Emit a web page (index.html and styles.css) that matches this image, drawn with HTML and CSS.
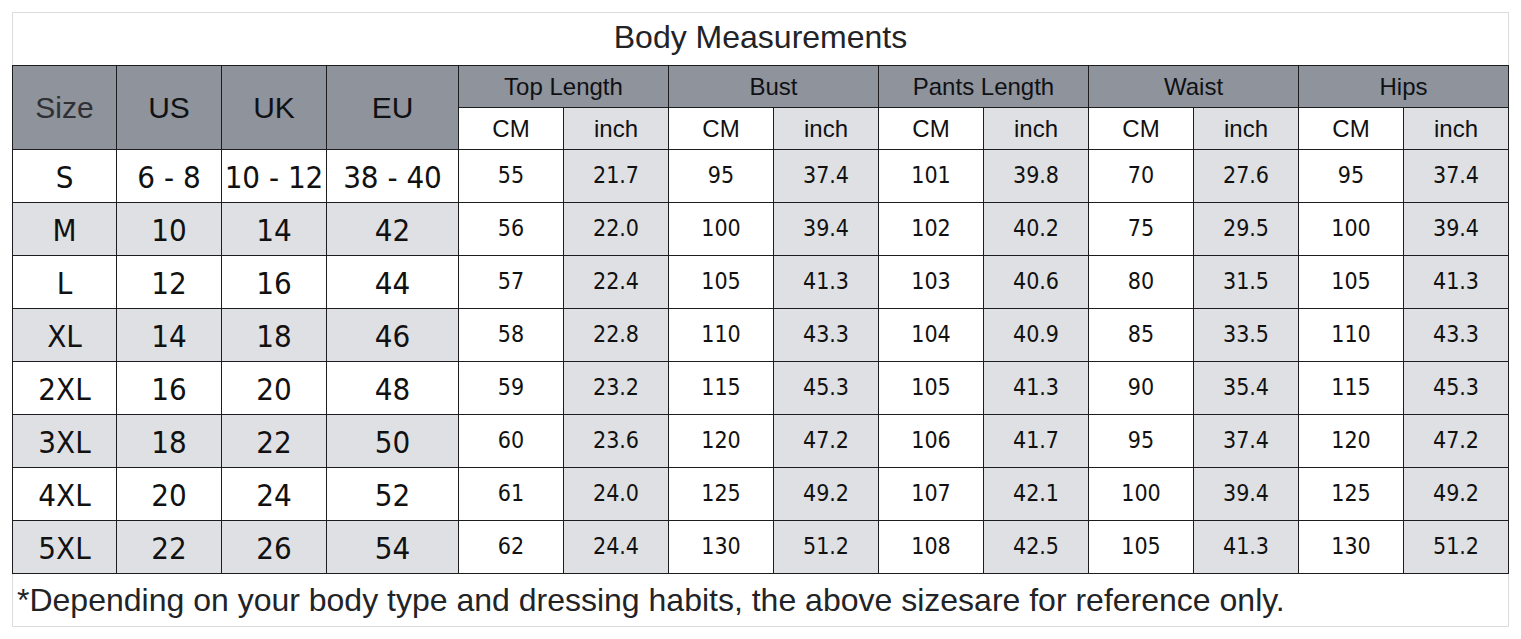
FILE: index.html
```html
<!DOCTYPE html>
<html lang="en">
<head>
<meta charset="utf-8">
<title>Body Measurements</title>
<link rel="stylesheet" href="styles.css">
</head>
<body>
<div class="chart">
  <div class="title">Body Measurements</div>
  <div class="grid">
    <div class="cell head first size-h rs2">Size</div>
    <div class="cell head rs2">US</div>
    <div class="cell head rs2">UK</div>
    <div class="cell head rs2">EU</div>
    <div class="cell head group cs2">Top Length</div>
    <div class="cell head group cs2">Bust</div>
    <div class="cell head group cs2">Pants Length</div>
    <div class="cell head group cs2">Waist</div>
    <div class="cell head group cs2">Hips</div>
    <div class="cell unit">CM</div><div class="cell unit alt">inch</div>
    <div class="cell unit">CM</div><div class="cell unit alt">inch</div>
    <div class="cell unit">CM</div><div class="cell unit alt">inch</div>
    <div class="cell unit">CM</div><div class="cell unit alt">inch</div>
    <div class="cell unit">CM</div><div class="cell unit alt">inch</div>

    <div class="cell big first">S</div><div class="cell big">6 - 8</div><div class="cell big">10 - 12</div><div class="cell big">38 - 40</div>
    <div class="cell num">55</div><div class="cell num alt">21.7</div><div class="cell num">95</div><div class="cell num alt">37.4</div><div class="cell num">101</div><div class="cell num alt">39.8</div><div class="cell num">70</div><div class="cell num alt">27.6</div><div class="cell num">95</div><div class="cell num alt">37.4</div>

    <div class="cell big first alt">M</div><div class="cell big alt">10</div><div class="cell big alt">14</div><div class="cell big alt">42</div>
    <div class="cell num">56</div><div class="cell num alt">22.0</div><div class="cell num">100</div><div class="cell num alt">39.4</div><div class="cell num">102</div><div class="cell num alt">40.2</div><div class="cell num">75</div><div class="cell num alt">29.5</div><div class="cell num">100</div><div class="cell num alt">39.4</div>

    <div class="cell big first">L</div><div class="cell big">12</div><div class="cell big">16</div><div class="cell big">44</div>
    <div class="cell num">57</div><div class="cell num alt">22.4</div><div class="cell num">105</div><div class="cell num alt">41.3</div><div class="cell num">103</div><div class="cell num alt">40.6</div><div class="cell num">80</div><div class="cell num alt">31.5</div><div class="cell num">105</div><div class="cell num alt">41.3</div>

    <div class="cell big first alt">XL</div><div class="cell big alt">14</div><div class="cell big alt">18</div><div class="cell big alt">46</div>
    <div class="cell num">58</div><div class="cell num alt">22.8</div><div class="cell num">110</div><div class="cell num alt">43.3</div><div class="cell num">104</div><div class="cell num alt">40.9</div><div class="cell num">85</div><div class="cell num alt">33.5</div><div class="cell num">110</div><div class="cell num alt">43.3</div>

    <div class="cell big first">2XL</div><div class="cell big">16</div><div class="cell big">20</div><div class="cell big">48</div>
    <div class="cell num">59</div><div class="cell num alt">23.2</div><div class="cell num">115</div><div class="cell num alt">45.3</div><div class="cell num">105</div><div class="cell num alt">41.3</div><div class="cell num">90</div><div class="cell num alt">35.4</div><div class="cell num">115</div><div class="cell num alt">45.3</div>

    <div class="cell big first alt">3XL</div><div class="cell big alt">18</div><div class="cell big alt">22</div><div class="cell big alt">50</div>
    <div class="cell num">60</div><div class="cell num alt">23.6</div><div class="cell num">120</div><div class="cell num alt">47.2</div><div class="cell num">106</div><div class="cell num alt">41.7</div><div class="cell num">95</div><div class="cell num alt">37.4</div><div class="cell num">120</div><div class="cell num alt">47.2</div>

    <div class="cell big first">4XL</div><div class="cell big">20</div><div class="cell big">24</div><div class="cell big">52</div>
    <div class="cell num">61</div><div class="cell num alt">24.0</div><div class="cell num">125</div><div class="cell num alt">49.2</div><div class="cell num">107</div><div class="cell num alt">42.1</div><div class="cell num">100</div><div class="cell num alt">39.4</div><div class="cell num">125</div><div class="cell num alt">49.2</div>

    <div class="cell big first alt">5XL</div><div class="cell big alt">22</div><div class="cell big alt">26</div><div class="cell big alt">54</div>
    <div class="cell num">62</div><div class="cell num alt">24.4</div><div class="cell num">130</div><div class="cell num alt">51.2</div><div class="cell num">108</div><div class="cell num alt">42.5</div><div class="cell num">105</div><div class="cell num alt">41.3</div><div class="cell num">130</div><div class="cell num alt">51.2</div>
  </div>
  <div class="note">*Depending on your body type and dressing habits, the above sizesare for reference only.</div>
</div>
</body>
</html>
```

FILE: styles.css
```css
html, body {
  margin: 0;
  padding: 0;
  background: #ffffff;
}

body {
  padding: 12px;
  font-family: "Liberation Sans", Arial, sans-serif;
  color: #1f1f22;
}

.chart {
  box-sizing: border-box;
  width: 1497px;
  border: 1px solid #dcdcdc;
  background: #ffffff;
}

.title {
  height: 52px;
  display: flex;
  align-items: center;
  justify-content: center;
  font-size: 32px;
  color: #222326;
  box-sizing: border-box;
  padding-bottom: 3px;
}

.grid {
  display: grid;
  grid-template-columns: 105px 105px 105px 132px repeat(10, 105px);
  grid-template-rows: 42px 42px repeat(8, 53px);
  border-top: 1px solid #1d1d1f;
  margin: 0 -1px;
}

.cell {
  box-sizing: border-box;
  border-right: 1px solid #1d1d1f;
  border-bottom: 1px solid #1d1d1f;
  display: flex;
  align-items: center;
  justify-content: center;
  background: #ffffff;
  color: #111111;
  white-space: nowrap;
}

.first {
  border-left: 1px solid #1d1d1f;
}

.alt {
  background: #dfe0e4;
}

.head {
  background: #8e939c;
  font-size: 30px;
  color: #101114;
}

.size-h {
  color: #2f3034;
  padding-top: 1px;
}

.group {
  font-size: 24px;
}

.rs2 {
  grid-row: span 2;
}

.cs2 {
  grid-column: span 2;
}

.unit {
  font-size: 24px;
}

.big {
  font-family: "DejaVu Sans Condensed", "DejaVu Sans", sans-serif;
  font-size: 31px;
  padding-top: 1px;
}

.num {
  font-family: "DejaVu Sans Condensed", "DejaVu Sans", sans-serif;
  font-size: 23px;
  padding-bottom: 2px;
}

.note {
  height: 52px;
  display: flex;
  align-items: center;
  padding-left: 4px;
  font-size: 32px;
  color: #222326;
}
```
